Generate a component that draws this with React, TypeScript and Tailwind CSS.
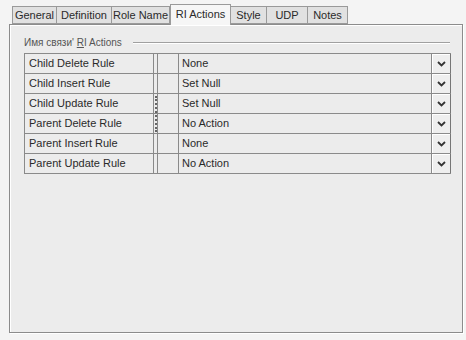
import React from 'react';

const tabs = ['General', 'Definition', 'Role Name', 'RI Actions', 'Style', 'UDP', 'Notes'];
const tabWidths = [45, 55, 58, 61, 36, 41, 40];

const rows = [
  { name: 'Child Delete Rule', value: 'None' },
  { name: 'Child Insert Rule', value: 'Set Null' },
  { name: 'Child Update Rule', value: 'Set Null' },
  { name: 'Parent Delete Rule', value: 'No Action' },
  { name: 'Parent Insert Rule', value: 'None' },
  { name: 'Parent Update Rule', value: 'No Action' },
];

function Chevron() {
  return (
    <svg width="9" height="6" viewBox="0 0 9 6">
      <path d="M1 1l3.5 3.5L8 1" fill="none" stroke="#333" strokeWidth="1.8" />
    </svg>
  );
}

export default function App() {
  return (
    <div
      className="w-[466px] h-[340px] bg-[#f4f4f4] pt-[3px] pl-[9px] text-[11px] text-[#2a2a2a] overflow-hidden"
      style={{ fontFamily: '"Liberation Sans", "DejaVu Sans", sans-serif' }}
    >
      {/* tab strip */}
      <div className="flex items-end h-[21px] pl-[3px] relative z-10">
        {tabs.map((t, i) => {
          const active = t === 'RI Actions';
          return (
            <div
              key={t}
              style={{ width: tabWidths[i] }}
              className={
                active
                  ? 'h-[21px] -mb-px bg-[#f6f6f6] border border-b-0 border-[#9a9a9a] flex items-center justify-center pb-[1px]'
                  : 'h-[18px] bg-[#e1e1e1] border border-[#9a9a9a] border-l-0 first:border-l flex items-center justify-center'
              }
            >
              {t}
            </div>
          );
        })}
      </div>

      {/* panel */}
      <div className="w-[454px] h-[309px] bg-[#ececec] border border-[#8c8c8c] shadow-[inset_1px_1px_0_#fff,1px_1px_0_#fff] pt-[10px] pl-[14px]">
        <div className="flex items-center h-[15px] w-[426px]">
          <span className="text-[10px] text-[#555] pr-[11px]">
            Имя связи' <span className="underline">R</span>I Actions
          </span>
          <div className="flex-1 border-t border-[#a0a0a0] border-b border-b-white" />
        </div>

        <div className="mt-[3px] w-[427px] border-t border-l border-[#8a8a8a] relative">
          {rows.map((r) => (
            <div key={r.name} className="flex h-[20px] border-b border-[#8a8a8a]">
              <div className="w-[129px] border-r border-[#8a8a8a] pl-[4px] flex items-center">{r.name}</div>
              <div className="w-[4px] border-r border-[#8a8a8a]" />
              <div className="w-[21px] border-r border-[#8a8a8a]" />
              <div className="w-[253px] border-r border-[#8a8a8a] pl-[3px] flex items-center">{r.value}</div>
              <div className="w-[19px] border-r border-[#777] bg-[#eeeeee] shadow-[inset_1px_1px_0_#fff] flex items-center justify-center">
                <Chevron />
              </div>
            </div>
          ))}
          {/* splitter grip */}
          <div className="absolute left-[130px] top-[42px] h-[36px] border-l-2 border-dotted border-[#666]" />
        </div>
      </div>
    </div>
  );
}
